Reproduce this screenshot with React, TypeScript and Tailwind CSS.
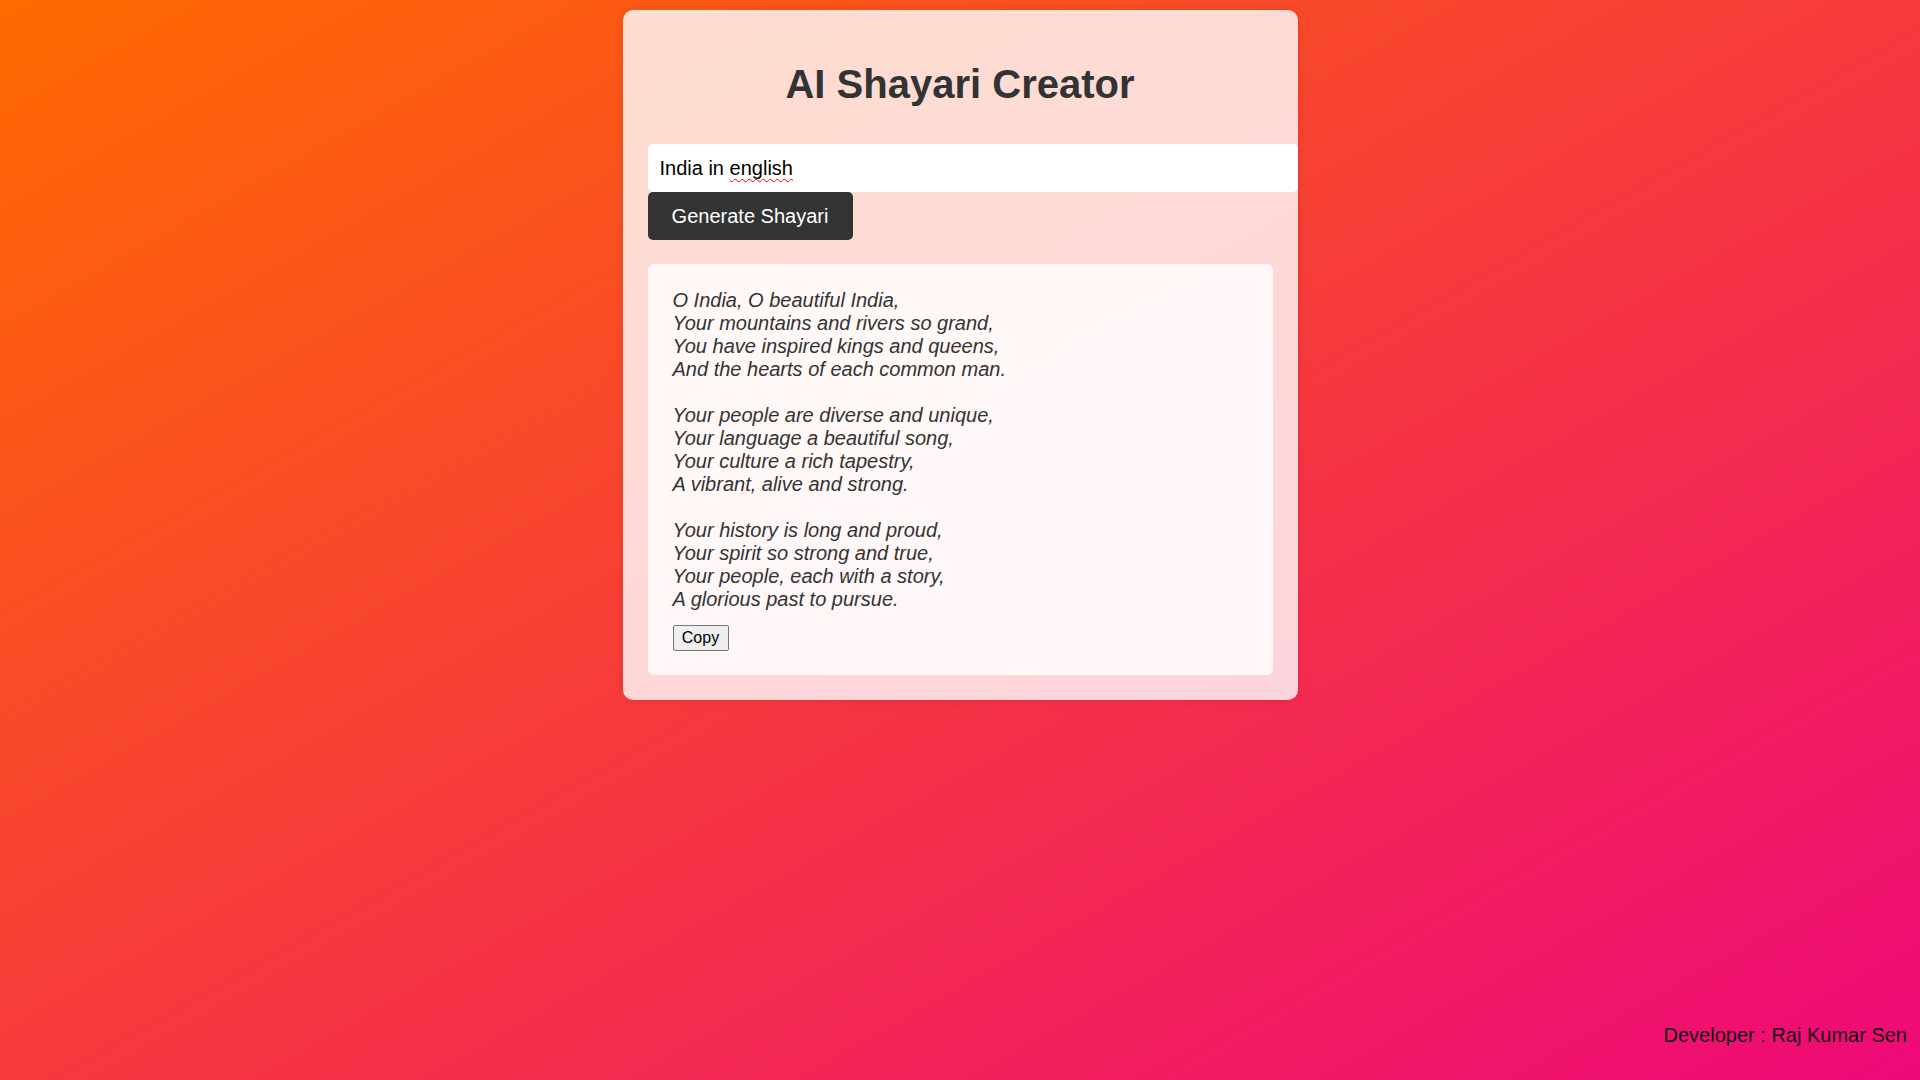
import React from "react";

const poem = [
  "O India, O beautiful India,",
  "Your mountains and rivers so grand,",
  "You have inspired kings and queens,",
  "And the hearts of each common man.",
  "",
  "Your people are diverse and unique,",
  "Your language a beautiful song,",
  "Your culture a rich tapestry,",
  "A vibrant, alive and strong.",
  "",
  "Your history is long and proud,",
  "Your spirit so strong and true,",
  "Your people, each with a story,",
  "A glorious past to pursue.",
];

export default function App() {
  return (
    <div
      className="min-h-screen w-full flex flex-col bg-[linear-gradient(to_bottom_right,#ff6a00,#ee0979)]"
      style={{ fontFamily: '"Liberation Sans", Arial, sans-serif' }}
    >
      <div className="mx-auto mt-[10px] w-[675px] rounded-[10px] bg-[rgba(255,255,255,0.8)] p-[25px] shadow-[0_0_10px_rgba(0,0,0,0.1)]">
        <h1 className="mt-[26px] mb-[37px] text-center text-[40px] leading-[46px] font-bold text-[#333]">
          AI Shayari Creator
        </h1>
        <div className="flex h-[48px] w-[650px] items-center rounded-[5px] bg-white pl-[12px] pt-[1px] text-[20px] leading-[23px] text-black">
          <span>
            India in{" "}
            <span className="underline decoration-wavy decoration-[#e00] decoration-1 underline-offset-[3px] [text-decoration-skip-ink:none]">
              english
            </span>
          </span>
        </div>
        <button className="flex h-[48px] w-[205px] items-center justify-center rounded-[5px] bg-[#333] text-[20px] leading-[23px] text-white">
          Generate Shayari
        </button>
        <div className="mt-[24px] w-full rounded-[6px] bg-[rgba(255,255,255,0.8)] px-[25px] pt-[24.5px] pb-[24px]">
          <div className="text-[20px] italic leading-[23px] text-[#333]">
            {poem.map((line, i) => (
              <div key={i} className="h-[23px] whitespace-pre">
                {line}
              </div>
            ))}
          </div>
          <button className="mt-[14px] flex h-[26px] w-[56px] items-center justify-center rounded-[2px] border border-[#767676] bg-[#efefef] text-[16px] leading-[18px] text-black">
            Copy
          </button>
        </div>
      </div>
      <div className="mt-auto pr-[13px] pb-[33px] text-right text-[20px] leading-[23px] text-[#111]">
        Developer : Raj Kumar Sen
      </div>
    </div>
  );
}
